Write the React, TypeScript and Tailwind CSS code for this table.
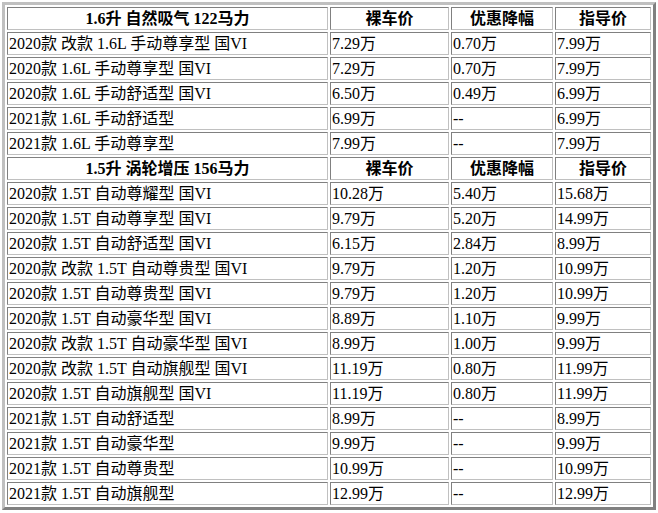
import { Fragment } from "react";

const groups = [
  {
    title: "1.6升 自然吸气 122马力",
    rows: [
      ["2020款 改款 1.6L 手动尊享型 国VI", "7.29万", "0.70万", "7.99万"],
      ["2020款 1.6L 手动尊享型 国VI", "7.29万", "0.70万", "7.99万"],
      ["2020款 1.6L 手动舒适型 国VI", "6.50万", "0.49万", "6.99万"],
      ["2021款 1.6L 手动舒适型", "6.99万", "--", "6.99万"],
      ["2021款 1.6L 手动尊享型", "7.99万", "--", "7.99万"],
    ],
  },
  {
    title: "1.5升 涡轮增压 156马力",
    rows: [
      ["2020款 1.5T 自动尊耀型 国VI", "10.28万", "5.40万", "15.68万"],
      ["2020款 1.5T 自动尊享型 国VI", "9.79万", "5.20万", "14.99万"],
      ["2020款 1.5T 自动舒适型 国VI", "6.15万", "2.84万", "8.99万"],
      ["2020款 改款 1.5T 自动尊贵型 国VI", "9.79万", "1.20万", "10.99万"],
      ["2020款 1.5T 自动尊贵型 国VI", "9.79万", "1.20万", "10.99万"],
      ["2020款 1.5T 自动豪华型 国VI", "8.89万", "1.10万", "9.99万"],
      ["2020款 改款 1.5T 自动豪华型 国VI", "8.99万", "1.00万", "9.99万"],
      ["2020款 改款 1.5T 自动旗舰型 国VI", "11.19万", "0.80万", "11.99万"],
      ["2020款 1.5T 自动旗舰型 国VI", "11.19万", "0.80万", "11.99万"],
      ["2021款 1.5T 自动舒适型", "8.99万", "--", "8.99万"],
      ["2021款 1.5T 自动豪华型", "9.99万", "--", "9.99万"],
      ["2021款 1.5T 自动尊贵型", "10.99万", "--", "10.99万"],
      ["2021款 1.5T 自动旗舰型", "12.99万", "--", "12.99万"],
    ],
  },
];

const cell =
  "border border-t-[#808080] border-l-[#808080] border-r-[#c0c0c0] border-b-[#c0c0c0] p-px leading-[19px] whitespace-nowrap overflow-hidden";

export default function App() {
  return (
    <div className="bg-white min-h-[513px] pt-[2px] pl-[2px] text-black text-base font-['Liberation_Serif','Noto_Sans_CJK_SC',serif]">
      <table className="table-fixed w-[654px] border-separate border-spacing-[2px] border-[3px] border-t-[#c0c0c0] border-l-[#c0c0c0] border-r-[#808080] border-b-[#808080]">
        <colgroup>
          <col className="w-[321px]" />
          <col className="w-[119px]" />
          <col className="w-[102px]" />
          <col className="w-[96px]" />
        </colgroup>
        <tbody>
          {groups.map((group) => (
            <Fragment key={group.title}>
              <tr>
                <th className={`${cell} font-bold text-center`}>{group.title}</th>
                <th className={`${cell} font-bold text-center`}>裸车价</th>
                <th className={`${cell} font-bold text-center`}>优惠降幅</th>
                <th className={`${cell} font-bold text-center`}>指导价</th>
              </tr>
              {group.rows.map((row, i) => (
                <tr key={i}>
                  {row.map((value, j) => (
                    <td key={j} className={`${cell} text-left font-normal`}>
                      {value}
                    </td>
                  ))}
                </tr>
              ))}
            </Fragment>
          ))}
        </tbody>
      </table>
    </div>
  );
}
